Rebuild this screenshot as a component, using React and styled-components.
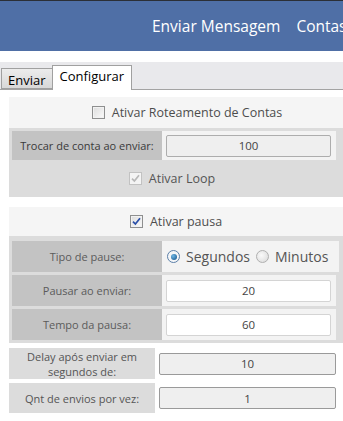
import React from 'react';
import styled, { createGlobalStyle } from 'styled-components';

const GlobalStyle = createGlobalStyle`
  html, body {
    margin: 0;
    padding: 0;
    background: #fff;
    font-family: "Open Sans", "Noto Sans", "Liberation Sans", sans-serif;
    overflow: hidden;
  }
`;

const Check = ({ checked, disabled }) => (
  <CheckBox $disabled={disabled}>
    {checked && (
      <svg width="9" height="9" viewBox="0 0 9 9">
        <path
          d="M1 4.6 L3.4 7 L8 1.2"
          fill="none"
          stroke={disabled ? '#b8b8b8' : '#2a4fa8'}
          strokeWidth="1.7"
        />
      </svg>
    )}
  </CheckBox>
);

const Radio = ({ checked }) => (
  <RadioDot $checked={checked}>
    {checked && <RadioInner />}
  </RadioDot>
);

const App = () => {
  return (
    <>
      <GlobalStyle />
      <Header>
        <NavItem>Enviar Mensagem</NavItem>
        <NavItem>Contas</NavItem>
      </Header>

      <TabStrip>
        <Tab>Enviar</Tab>
        <Tab $active>Configurar</Tab>
      </TabStrip>

      <Content>
        <Panel>
          <PanelHead $shift="22px">
            <Check />
            <span>Ativar Roteamento de Contas</span>
          </PanelHead>
          <PanelBody>
            <Row>
              <LabelCell $dark>Trocar de conta ao enviar:</LabelCell>
              <ValueCell>
                <Field $readonly>100</Field>
              </ValueCell>
            </Row>
            <CenterLine>
              <Check checked disabled />
              <span>Ativar Loop</span>
            </CenterLine>
          </PanelBody>
        </Panel>

        <Panel $gap>
          <PanelHead $short>
            <Check checked />
            <span>Ativar pausa</span>
          </PanelHead>
          <PanelBody $rows>
            <Row $tall>
              <LabelCell>Tipo de pause:</LabelCell>
              <ValueCell>
                <RadioGroup>
                  <Radio checked />
                  <RadioLabel>Segundos</RadioLabel>
                  <Radio />
                  <RadioLabel>Minutos</RadioLabel>
                </RadioGroup>
              </ValueCell>
            </Row>
            <Row $tall>
              <LabelCell>Pausar ao enviar:</LabelCell>
              <ValueCell>
                <Field>20</Field>
              </ValueCell>
            </Row>
            <Row $tall>
              <LabelCell>Tempo da pausa:</LabelCell>
              <ValueCell>
                <Field>60</Field>
              </ValueCell>
            </Row>
          </PanelBody>
        </Panel>

        <LooseRow $first>
          <LooseLabel>Delay após enviar em<br />segundos de:</LooseLabel>
          <LooseValue>
            <Field $readonly $dark>10</Field>
          </LooseValue>
        </LooseRow>
        <LooseRow>
          <LooseLabel>Qnt de envios por vez:</LooseLabel>
          <LooseValue>
            <Field $readonly $dark>1</Field>
          </LooseValue>
        </LooseRow>
      </Content>
    </>
  );
};

const Header = styled.div`
  height: 50px;
  border-top: 1px solid #2b2f36;
  background: #4f6fa6;
  display: flex;
  align-items: center;
  gap: 16px;
  padding-left: 152px;
  white-space: nowrap;
  overflow: hidden;
`;

const NavItem = styled.span`
  color: #fff;
  font-size: 15.5px;
  padding-bottom: 1px;
`;

const TabStrip = styled.div`
  margin-top: 11px;
  height: 27px;
  background: #e9e9ec;
  border-bottom: 1px solid #a3a3a3;
  display: flex;
  align-items: flex-end;
  padding-left: 1px;
`;

const Tab = styled.div`
  box-sizing: border-box;
  height: ${(p) => (p.$active ? '25px' : '21px')};
  margin-bottom: ${(p) => (p.$active ? '-1px' : '0')};
  padding: ${(p) => (p.$active ? '1px 7px 0' : '2px 6px 0')};
  font-size: 13px;
  color: #000;
  border: 1px solid #a0a0a0;
  border-bottom: ${(p) => (p.$active ? 'none' : '1px solid #a0a0a0')};
  background: ${(p) =>
    p.$active ? '#fff' : 'linear-gradient(#ececec, #d8d8d8)'};
  ${(p) => (p.$active ? 'margin-left: -1px;' : '')}
`;

const Content = styled.div`
  padding: 7px 0 0 9px;
`;

const Panel = styled.div`
  margin-top: ${(p) => (p.$gap ? '10px' : '0')};
  background: #dcdcdc;
`;

const PanelHead = styled.div`
  height: ${(p) => (p.$short ? '29px' : '31px')};
  background: #f5f5f5;
  display: flex;
  align-items: center;
  justify-content: center;
  gap: 7px;
  font-size: 12.5px;
  color: #4d4d4d;
  padding-left: ${(p) => p.$shift || '0'};
`;

const PanelBody = styled.div`
  padding: ${(p) => (p.$rows ? '5px 7px 3px 3px' : '3px 7px 0 3px')};
  display: flex;
  flex-direction: column;
  gap: ${(p) => (p.$rows ? '3px' : '0')};
`;

const Row = styled.div`
  display: flex;
  height: ${(p) => (p.$tall ? '31px' : '29px')};
`;

const LabelCell = styled.div`
  width: 150px;
  flex-shrink: 0;
  background: #c3c3c3;
  display: flex;
  align-items: center;
  justify-content: center;
  font-size: 11px;
  color: ${(p) => (p.$dark ? '#3a3a3a' : '#5b5b5b')};
`;

const ValueCell = styled.div`
  flex: 1;
  background: #f3f3f3;
  display: flex;
  align-items: center;
  padding: 0 5px 0 4px;
`;

const Field = styled.div`
  box-sizing: border-box;
  width: 100%;
  height: 22px;
  border: 1px solid ${(p) => (p.$dark ? '#9a9a9a' : p.$readonly ? '#adadad' : '#d4d4d4')};
  border-radius: 2px;
  background: ${(p) => (p.$readonly ? '#efefef' : '#fff')};
  display: flex;
  align-items: center;
  justify-content: center;
  font-size: 11.5px;
  color: #444;
`;

const CenterLine = styled.div`
  height: 37px;
  display: flex;
  align-items: center;
  justify-content: center;
  gap: 7px;
  font-size: 12.5px;
  color: #555;
  padding-right: 4px;
`;

const CheckBox = styled.span`
  box-sizing: border-box;
  width: 13px;
  height: 13px;
  border: 1px solid ${(p) => (p.$disabled ? '#c2c2c2' : '#8e8f8f')};
  background: ${(p) =>
    p.$disabled ? '#f4f4f4' : 'linear-gradient(135deg, #dcdcdc, #fbfbfb)'};
  box-shadow: inset 0 0 0 1px ${(p) => (p.$disabled ? '#f4f4f4' : '#f2f2f2')};
  display: flex;
  align-items: center;
  justify-content: center;
`;

const RadioGroup = styled.div`
  display: flex;
  align-items: center;
  padding-left: 1px;
`;

const RadioDot = styled.span`
  box-sizing: border-box;
  width: 13px;
  height: 13px;
  border-radius: 50%;
  border: 1px solid ${(p) => (p.$checked ? '#5b7fa8' : '#b0b0b0')};
  background: ${(p) =>
    p.$checked ? '#f4f6f8' : 'radial-gradient(circle at 40% 40%, #fafafa, #d8d8d8)'};
  display: flex;
  align-items: center;
  justify-content: center;
`;

const RadioInner = styled.span`
  width: 6px;
  height: 6px;
  border-radius: 50%;
  background: radial-gradient(circle at 35% 35%, #6fb7e6, #0e4f86);
`;

const RadioLabel = styled.span`
  font-size: 14px;
  color: #555;
  margin: 0 6px 0 6px;
`;

const LooseRow = styled.div`
  display: flex;
  height: ${(p) => (p.$first ? '31px' : '30px')};
  margin-top: ${(p) => (p.$first ? '5px' : '4px')};
`;

const LooseLabel = styled.div`
  width: 146px;
  flex-shrink: 0;
  background: #dcdcdc;
  display: flex;
  align-items: center;
  justify-content: center;
  text-align: center;
  font-size: 11px;
  line-height: 15px;
  color: #555;
`;

const LooseValue = styled.div`
  flex: 1;
  display: flex;
  align-items: center;
  padding: 0 7px 0 4px;
`;

export default App;
